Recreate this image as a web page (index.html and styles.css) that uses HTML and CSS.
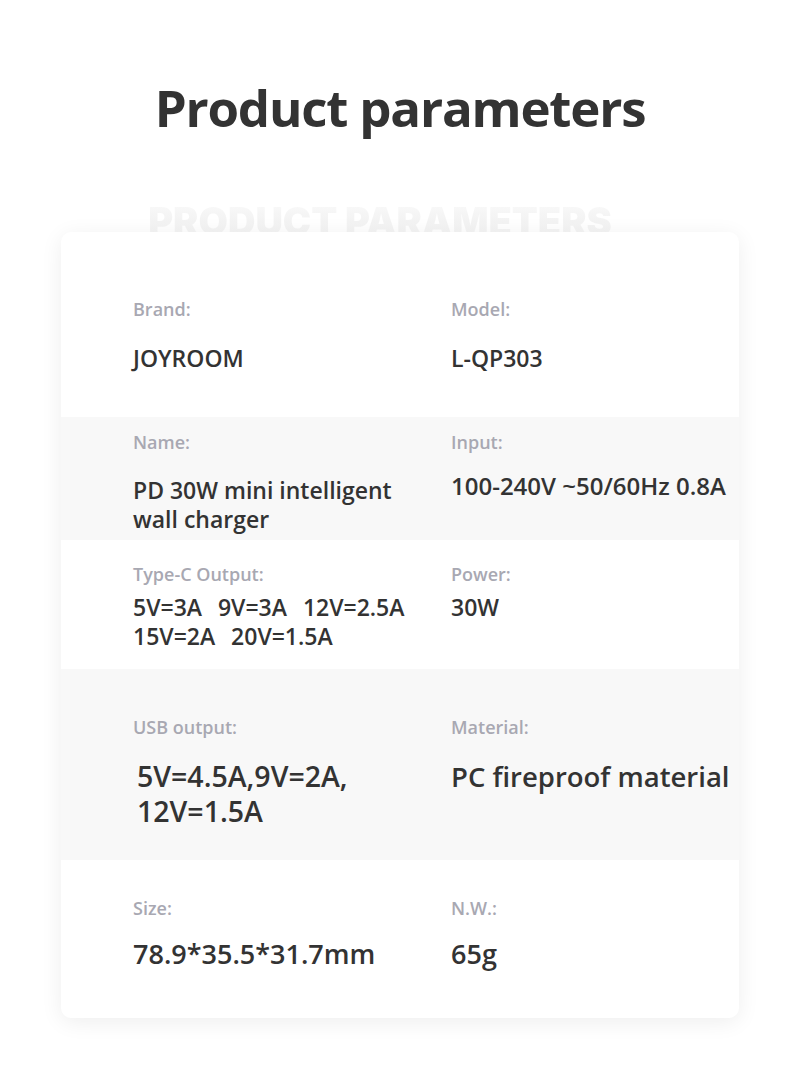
FILE: index.html
```html
<!DOCTYPE html>
<html lang="en">
<head>
    <meta charset="UTF-8">
    <meta name="viewport" content="width=device-width, initial-scale=1.0">
    <title>Product parameters</title>
    <link rel="stylesheet" href="styles.css">
</head>
<body>
<div class="page">
    <h1 class="title">Product parameters</h1>
    <div class="watermark"><span>PRODUCT PARAMETERS</span></div>

    <div class="card">
        <div class="row row-brand">
            <div class="cell">
                <div class="label">Brand:</div>
                <div class="value">JOYROOM</div>
            </div>
            <div class="cell">
                <div class="label">Model:</div>
                <div class="value">L-QP303</div>
            </div>
        </div>

        <div class="row row-name shaded">
            <div class="cell">
                <div class="label">Name:</div>
                <div class="value">PD 30W mini intelligent<br>wall charger</div>
            </div>
            <div class="cell">
                <div class="label">Input:</div>
                <div class="value value-up">100-240V ~50/60Hz 0.8A</div>
            </div>
        </div>

        <div class="row row-typec">
            <div class="cell">
                <div class="label">Type-C Output:</div>
                <div class="value value-tight">5V=3A&nbsp; 9V=3A&nbsp; 12V=2.5A<br>15V=2A&nbsp; 20V=1.5A</div>
            </div>
            <div class="cell">
                <div class="label">Power:</div>
                <div class="value value-tight">30W</div>
            </div>
        </div>

        <div class="row row-usb shaded">
            <div class="cell">
                <div class="label">USB output:</div>
                <div class="value value-big value-indent">5V=4.5A,9V=2A,<br>12V=1.5A</div>
            </div>
            <div class="cell">
                <div class="label">Material:</div>
                <div class="value value-big value-narrow">PC fireproof material</div>
            </div>
        </div>

        <div class="row row-size">
            <div class="cell">
                <div class="label">Size:</div>
                <div class="value value-mid">78.9*35.5*31.7mm</div>
            </div>
            <div class="cell">
                <div class="label">N.W.:</div>
                <div class="value value-mid">65g</div>
            </div>
        </div>
    </div>
</div>
</body>
</html>
```

FILE: styles.css
```css
body {
    margin: 0;
    background-color: #ffffff;
    font-family: "Open Sans", "Noto Sans", sans-serif;
    color: #333333;
}

.page {
    width: 800px;
    height: 1086px;
    overflow: hidden;
}

.title {
    margin: 77px 0 0;
    font-size: 51px;
    line-height: 60px;
    font-weight: 700;
    text-align: center;
    color: #333333;
    letter-spacing: -1.2px;
}

/* faded caps behind the card top */
.watermark {
    height: 95px;
    overflow: hidden;
    box-sizing: border-box;
    padding-top: 65px;
    padding-right: 40px;
    text-align: center;
}

.watermark span {
    font-family: Inter, "Open Sans", sans-serif;
    font-size: 38px;
    line-height: 1;
    font-weight: 900;
    background: linear-gradient(to bottom, #fbfbfb, #eaeaea);
    -webkit-background-clip: text;
    background-clip: text;
    color: transparent;
}

.card {
    margin: 0 61px;
    height: 786px;
    background-color: #ffffff;
    border-radius: 10px;
    box-shadow: 0 4px 22px rgba(0, 0, 0, 0.07);
    overflow: hidden;
}

.row {
    display: grid;
    grid-template-columns: 318px 1fr;
    padding-left: 72px;
}

.shaded {
    background-color: #f8f8f8;
}

.label {
    font-size: 18px;
    line-height: 24px;
    font-weight: 600;
    color: #a8a8b2;
}

.value {
    font-size: 23px;
    line-height: 29px;
    font-weight: 600;
    color: #333333;
}

.value-up {
    font-size: 24px;
}

.value-tight {
    font-size: 23px;
    line-height: 29px;
    word-spacing: 2px;
}

.value-big {
    font-size: 28.5px;
    line-height: 35px;
}

.value-narrow {
    font-size: 27.5px;
}

.value-mid {
    font-size: 27px;
    line-height: 32px;
}

.value-indent {
    padding-left: 4px;
}

.row-brand {
    height: 185px;
    box-sizing: border-box;
    padding-top: 65px;
}
.row-brand .value { margin-top: 23px; }

.row-name {
    height: 123px;
    box-sizing: border-box;
    padding-top: 13px;
}
.row-name .value { margin-top: 22px; }
.row-name .value-up { margin-top: 17px; }

.row-typec {
    height: 129px;
    box-sizing: border-box;
    padding-top: 22px;
}
.row-typec .value { margin-top: 7px; }

.row-usb {
    height: 191px;
    box-sizing: border-box;
    padding-top: 46px;
}
.row-usb .value { margin-top: 20px; }

.row-size {
    height: 158px;
    box-sizing: border-box;
    padding-top: 36px;
}
.row-size .value { margin-top: 18px; }
```
